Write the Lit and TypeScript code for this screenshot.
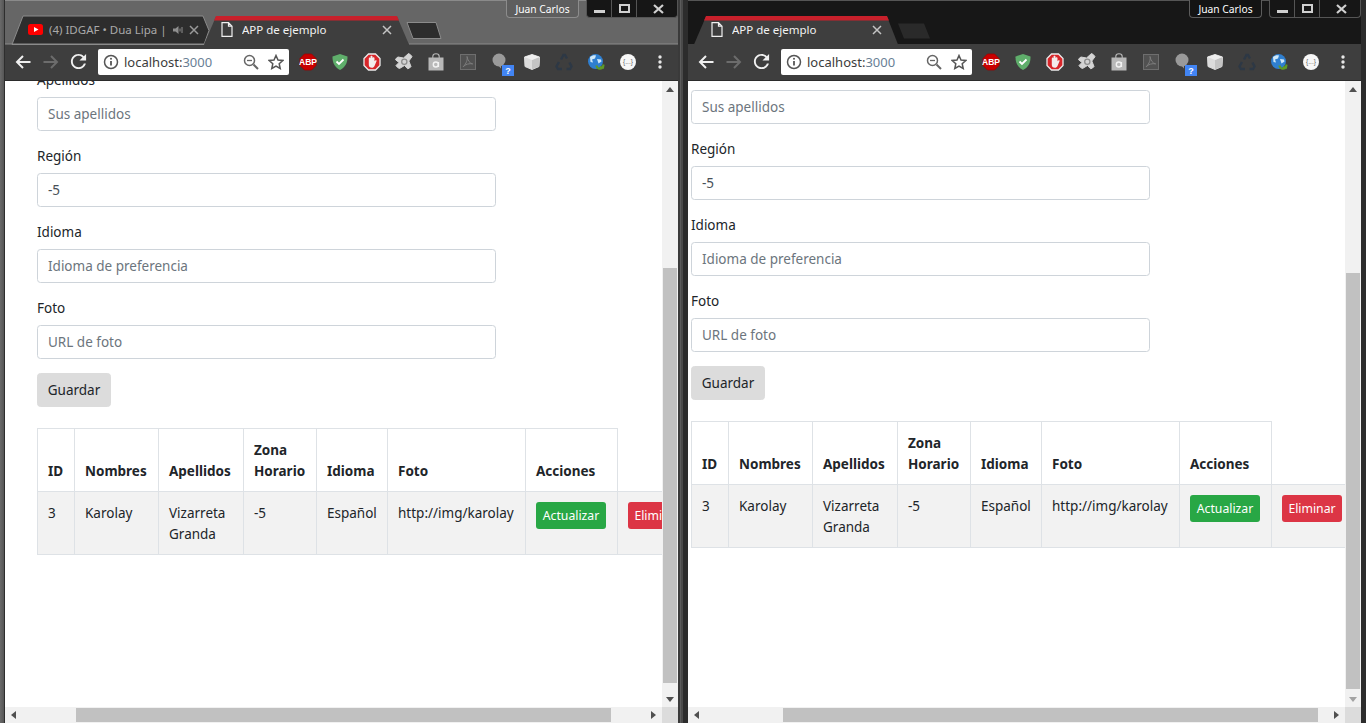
import { LitElement, html, css, svg } from "lit";
import { customElement, property } from "lit/decorators.js";

const icon = (w: number, h: number, body: unknown) =>
  html`<svg width=${w} height=${h} viewBox="0 0 ${w} ${h}" xmlns="http://www.w3.org/2000/svg">${body}</svg>`;

const extensions = () => [
  icon(18, 18, svg`<polygon points="5.500,1 12.500,1 17,5.500 17,12.500 12.500,17 5.500,17 1,12.500 1,5.500" fill="#c80000" stroke="#a00000" stroke-width=".8"/><text x="9" y="12.200" text-anchor="middle" font-family="Liberation Sans" font-size="8.500" font-weight="700" fill="#fff">ABP</text>`),
  icon(18, 18, svg`<path d="M9 1l7.500 2.500c.2 6.500-2.500 11-7.500 13.500C4 14.500 1.300 10 1.500 3.500z" fill="#5fae6b"/><path d="M5.500 8.500l2.500 2.500L12.500 6.500" fill="none" stroke="#fff" stroke-width="1.800"/>`),
  icon(18, 18, svg`<polygon points="5.500,1 12.500,1 17,5.500 17,12.500 12.500,17 5.500,17 1,12.500 1,5.500" fill="#d8262a" stroke="#ececec" stroke-width="1.300"/><path d="M5.800 8V5.500c0-1.200 1.500-1.200 1.700-.2V3.800c0-1.300 2-1.300 2 0v1.200c.3-1 2-.8 2 .3v3l1-1c.7-.5 1.400.2 1 .9L11.500 13c-.6 1-1.300 1.800-2.700 1.800-2 0-3-1.200-3-3.300z" fill="#f3ecec"/>`),
  icon(20, 20, svg`<path d="M14.500 1.500c1.500.7 2.800 1.800 3.500 3.200l-3.200 4.300 2.200 5.500c-.8 1.200-2 2-3.300 2.300L10.500 13.500l-5 3c-1.500-.5-3-1.700-3.500-3l3-3-3.500-2.800C2 6.500 2.800 5.500 4 5l5.500 1z" fill="#d4d4d4" stroke="#d4d4d4" stroke-linejoin="round"/><circle cx="10.300" cy="9.800" r="2.600" fill="none" stroke="#8d8d8d" stroke-width="1.300"/>`),
  icon(18, 18, svg`<path d="M5.800 5V3.500c0-3.600 6.400-3.600 6.400 0V5" fill="none" stroke="#b8b8b8" stroke-width="1.100"/><rect x="1.500" y="4.500" width="15" height="13" fill="#b8b8b8"/><circle cx="8.800" cy="11.500" r="2.500" fill="none" stroke="#f2f2f2" stroke-width="1.400"/><path d="M11.500 9v5" stroke="#f2f2f2" stroke-width="1.200"/>`),
  icon(18, 18, svg`<rect x="1.500" y="1.500" width="15" height="15" fill="#515151" stroke="#6e6e6e"/><path d="M8 3.500c.8 3-.6 7-3.800 10.200 2.500-2.500 6-3.500 9.500-2.800-3-.5-5-3.500-5.700-7.400z" fill="none" stroke="#7d7d7d" stroke-width="1"/>`),
  html`<span class="bubble">${icon(26, 24, svg`<circle cx="7" cy="7" r="6.500" fill="#9a9a9a"/><path d="M6 12l3 3.500V12z" fill="#9a9a9a"/><rect x="10" y="12" width="12" height="11" fill="#4285f4"/><text x="16" y="21" text-anchor="middle" font-family="Liberation Sans" font-size="9" font-weight="700" fill="#fff">?</text>`)}</span>`,
  icon(18, 18, svg`<polygon points="9,1.500 16.500,4 16,13.500 9,16.500 2,13.500 1.500,4" fill="#dcdcdc" stroke="#dcdcdc" stroke-linejoin="round"/><polygon points="9,7 16.500,4 16,13.500 9,16.500" fill="#c4c4c4"/><polygon points="9,1.500 16.500,4 9,7 1.500,4" fill="#efefef"/>`),
  icon(18, 18, svg`<path d="M6 6.500L8.500 2h1.500l2 3.500M14.500 9.500l2 4-1.500 2.500h-3.500M7 16H3l-1.500-2.500L4 9" fill="none" stroke="#2d3845" stroke-width="2.400"/>`),
  icon(18, 18, svg`<circle cx="8.500" cy="8.500" r="7.500" fill="#2f7fd0"/><path d="M3 4c2-1.500 4-2 6-1.500l-1 3-3 1 1 3-2.500-.5zM10 6l4 .5.500 2-3 2z" fill="#cfe8f8"/><path d="M9.500 12.500a3.500 3.500 0 0 0 6.500 1.500M16.500 11.500l-.5 3-3-.5" fill="none" stroke="#5f9a28" stroke-width="2.200"/>`),
  icon(18, 18, svg`<circle cx="9" cy="9" r="8" fill="#f7f7f7"/><text x="9" y="11.300" text-anchor="middle" font-family="Liberation Sans" font-size="6.500" fill="#666">{...}</text>`),
  icon(6, 16, svg`<circle cx="3" cy="3" r="1.700" fill="#e8e8e8"/><circle cx="3" cy="8" r="1.700" fill="#e8e8e8"/><circle cx="3" cy="13" r="1.700" fill="#e8e8e8"/>`),
];

const fileIcon = () =>
  icon(12, 15, svg`<path d="M1 .7h6.500L11 4.200V14.300H1z M7.500 .7V4.200H11" fill="none" stroke="#f0f0f0" stroke-width="1.200"/>`);
const closeIcon = (c: string) =>
  icon(10, 10, svg`<path d="M1 1l8 8M9 1l-8 8" stroke=${c} stroke-width="1.500"/>`);

@customElement("browser-window")
class BrowserWindow extends LitElement {
  @property() variant = "left";

  static styles = css`
    :host { display: block; width: 673px; height: 723px; font-family: "Noto Sans", "Open Sans", sans-serif; }
    .win { width: 673px; height: 723px; display: flex; flex-direction: column; overflow: hidden; background: #fff; }
    .title { position: relative; height: 44px; flex: none; display: flex; box-sizing: border-box; padding: 14px 0 0 6px; }
    .left .title { background: #666666; border-top: 1px solid #8a8a8a; }
    .right .title { background: #171717; border-top: 1px solid #555; }
    .shapes { position: absolute; left: 0; top: -1px; }
    .tab { position: relative; height: 29px; box-sizing: border-box; display: flex; align-items: center; padding: 0 0 0 17px; flex: none; font-size: 11.500px; color: #f2f2f2; }
    .tab.bg { width: 193px; color: #a9a9a9; }
    .tab.active { width: 205px; padding-right: 17px; }
    .tab .fav { width: 15px; flex: none; display: flex; margin-right: 6px; }
    .tab .name { flex: 1; white-space: nowrap; overflow: hidden; min-width: 0; }
    .tab.bg .close { margin-right: 5px; }
    .tab .spk { margin-right: 5px; display: flex; }
    .tab .close { display: flex; flex: none; }
    .caption { position: absolute; top: -1px; right: 0; display: flex; gap: 7px; height: 18px; }
    .who { width: 73px; box-sizing: border-box; display: flex; align-items: center; justify-content: center; font-size: 10.250px; color: #fff; border: 1px solid #8c8c8c; border-top: none; border-radius: 0 0 4px 4px; }
    .left .who { background: #5e5e5e; }
    .right .who { background: #141414; border-color: #5c5c5c; }
    .ctl { width: 92px; display: grid; grid-template-columns: 25px 25px 42px; box-sizing: border-box; background: #161616; border: 1px solid #555; border-top: none; border-radius: 0 0 4px 4px; }
    .ctl span { display: flex; align-items: center; justify-content: center; border-right: 1px solid #555; }
    .ctl span:last-child { border-right: none; }
    .toolbar { height: 37px; flex: none; box-sizing: border-box; background: #3e3e3e; border-bottom: 1px solid #2b2b2b; display: flex; align-items: center; padding-left: 4px; }
    .nav { width: 28px; height: 28px; display: flex; align-items: center; justify-content: center; flex: none; }
    .omni { width: 191px; height: 26px; margin: 0 3px 0 5px; flex: none; background: #fff; border-radius: 2px; display: flex; align-items: center; box-sizing: border-box; padding-left: 5px; font-size: 13px; color: #3c3c3c; }
    .omni .host { margin-left: 5px; flex: 1; white-space: nowrap; }
    .omni .port { color: #6a7f96; }
    .omni .tool { display: flex; }
    .omni .tool + .tool { margin-left: 9px; margin-right: 5px; }
    .ext { width: 32px; height: 28px; display: flex; align-items: center; justify-content: center; flex: none; }
    .bubble { display: flex; margin: 6px 0 0 10px; }
    .middle { flex: 1; display: flex; min-height: 0; }
    .view { flex: 1; min-width: 0; overflow: hidden; background: #fff; font-size: 13.500px; line-height: 21px; color: #212529; }
    .page { box-sizing: border-box; width: 700px; }
    .left .page { padding-left: 32px; margin-top: -12px; }
    .right .page { padding-left: 3px; margin-top: -19px; }
    .right .group:first-child label { visibility: hidden; }
    .group { width: 459px; margin-bottom: 14px; }
    label { display: block; margin-bottom: 7px; height: 20px; padding-top: 1px; }
    input { display: block; width: 459px; height: 34px; box-sizing: border-box; padding: 0 10px; border: 1px solid #ced4da; border-radius: 3.500px; font: inherit; color: #495057; background: #fff; outline: none; }
    input::placeholder { color: #6c757d; opacity: 1; }
    .save { display: block; width: 74px; height: 34px; box-sizing: border-box; border: 1px solid #dcdcdc; background: #dcdcdc; border-radius: 3.500px; font: inherit; color: #212529; padding: 0; }
    table { border-collapse: collapse; table-layout: fixed; width: 661px; margin-top: 21px; }
    th, td { border: 1px solid #dee2e6; padding: 11px 10px 9px; vertical-align: top; text-align: left; box-sizing: border-box; font-weight: 400; }
    thead th { vertical-align: bottom; font-weight: 700; color: #212529; height: 63px; }
    tbody tr { background: #f2f2f2; height: 63px; }
    .sm { display: block; height: 27px; margin-top: -1px; box-sizing: border-box; border-radius: 3px; font: inherit; font-size: 12.250px; line-height: 18px; color: #fff; border: none; padding: 0; white-space: nowrap; }
    .ok { background: #28a745; width: 70px; }
    .del { background: #dc3545; width: 60px; }
    .vbar { width: 16px; flex: none; background: #f1f1f1; display: flex; flex-direction: column; align-items: center; }
    .arrow { height: 16px; flex: none; display: flex; align-items: center; justify-content: center; }
    .thumb { background: #c1c1c1; }
    .v { width: 14px; flex: none; }
    .grow { flex: 1; }
    .hbar { height: 16px; flex: none; background: #f1f1f1; display: flex; align-items: center; }
    .hbar .h { height: 14px; flex: none; }
    .hbar .arrow { width: 17px; }
    .corner { width: 16px; height: 16px; background: #dcdcdc; flex: none; }
  `;

  render() {
    const left = this.variant === "left";
    const shapes = left
      ? svg`
        <polygon points="7,44 18,15.500 198,15.500 204,30 199,44" fill="#2d2d2d" stroke="#8b8b8b"/>
        <path d="M0 43.500H199M404 43.500H673" stroke="#8b8b8b" fill="none"/>
        <polygon points="199,44 211,16 392,16 404,44" fill="#3e3e3e"/>
        <polygon points="211,15.500 392,15.500 394,20 209,20" fill="#c8202b"/>
        <polygon points="402,22 431,22 436,38 408,38" fill="#2d2d2d" stroke="#8b8b8b"/>`
      : svg`
        <polygon points="6,44 18,16 199,16 210,44" fill="#3e3e3e"/>
        <polygon points="18,15.500 199,15.500 201,20 16,20" fill="#c8202b"/>
        <polygon points="210,23 236,23 242,38 216,38" fill="#2a2a2a"/>`;

    return html`<div class="win ${this.variant}">
      <div class="title">
        <svg class="shapes" width="673" height="45" viewBox="0 0 673 44">${shapes}</svg>
        ${left
          ? html`<div class="tab bg">
              <span class="fav">${icon(15, 11, svg`<rect width="15" height="11" rx="2.500" fill="#f00"/><polygon points="6,3 10.500,5.500 6,8" fill="#fff"/>`)}</span>
              <span class="name">(4) IDGAF • Dua Lipa |</span>
              <span class="spk">${icon(11, 10, svg`<path d="M0 3.500h2.500L5.500 1v8L2.500 6.500H0z" fill="#8f8f8f"/><path d="M7 3.500v3M9 2v6" stroke="#8f8f8f"/>`)}</span>
              <span class="close">${closeIcon("#9a9a9a")}</span>
            </div>`
          : null}
        <div class="tab active">
          <span class="fav">${fileIcon()}</span>
          <span class="name">APP de ejemplo</span>
          <span class="close">${closeIcon("#c4c4c4")}</span>
        </div>
        <div class="caption">
          <div class="who">Juan Carlos</div>
          <div class="ctl">
            <span>${icon(11, 10, svg`<rect x="0" y="6" width="11" height="3" fill="#d0d0d0"/>`)}</span>
            <span>${icon(11, 9, svg`<rect x="1" y="1" width="9" height="7" fill="none" stroke="#d0d0d0" stroke-width="2"/>`)}</span>
            <span>${icon(11, 10, svg`<path d="M1 1l9 8M10 1l-9 8" stroke="#d0d0d0" stroke-width="2.200"/>`)}</span>
          </div>
        </div>
      </div>
      <div class="toolbar">
        <span class="nav">${icon(16, 14, svg`<path d="M15.500 7H2.500M8 1L2 7l6 6" fill="none" stroke="#f0f0f0" stroke-width="2"/>`)}</span>
        <span class="nav">${icon(16, 14, svg`<path d="M.5 7H13.500M8 1l6 6-6 6" fill="none" stroke="#6c6c6c" stroke-width="2"/>`)}</span>
        <span class="nav">${icon(18, 18, svg`<g transform="translate(8.500 8.500) scale(.95) translate(-12 -12)"><path d="M17.650 6.350C16.200 4.900 14.210 4 12 4c-4.420 0-7.990 3.580-7.990 8s3.570 8 7.990 8c3.730 0 6.840-2.550 7.730-6h-2.080c-.82 2.330-3.040 4-5.650 4-3.310 0-6-2.690-6-6s2.690-6 6-6c1.660 0 3.140.69 4.220 1.780L13 11h7V4l-2.350 2.350z" fill="#f0f0f0"/></g>`)}</span>
        <div class="omni">
          <span class="tool">${icon(16, 16, svg`<circle cx="8" cy="8" r="6.500" fill="none" stroke="#555" stroke-width="1.500"/><path d="M8 7v4.500" stroke="#555" stroke-width="1.800"/><circle cx="8" cy="4.800" r="1" fill="#555"/>`)}</span>
          <span class="host">localhost:<span class="port">3000</span></span>
          <span class="tool">${icon(16, 16, svg`<circle cx="6.500" cy="6.500" r="5" fill="none" stroke="#666" stroke-width="1.500"/><path d="M10.500 10.500l4.500 4.500" stroke="#666" stroke-width="2"/><path d="M4 6.500h5" stroke="#666" stroke-width="1.300"/>`)}</span>
          <span class="tool">${icon(16, 16, svg`<polygon points="8,1.500 10,6 14.800,6.500 11.200,9.700 12.200,14.500 8,12 3.800,14.500 4.800,9.700 1.200,6.500 6,6" fill="none" stroke="#555" stroke-width="1.500"/>`)}</span>
        </div>
        ${extensions().map((e) => html`<span class="ext">${e}</span>`)}
      </div>
      <div class="middle">
        <div class="view">
          <div class="page">
            <div class="group"><label>Apellidos</label><input placeholder="Sus apellidos" /></div>
            <div class="group"><label>Región</label><input .value=${"-5"} /></div>
            <div class="group"><label>Idioma</label><input placeholder="Idioma de preferencia" /></div>
            <div class="group"><label>Foto</label><input placeholder="URL de foto" /></div>
            <button class="save">Guardar</button>
            <table>
              <colgroup>
                ${[37, 84, 85, 73, 71, 138, 92, 81].map((w) => html`<col style="width:${w}px" />`)}
              </colgroup>
              <thead>
                <tr>
                  <th>ID</th><th>Nombres</th><th>Apellidos</th><th>Zona Horario</th><th>Idioma</th><th>Foto</th><th>Acciones</th>
                </tr>
              </thead>
              <tbody>
                <tr>
                  <td>3</td><td>Karolay</td><td>Vizarreta Granda</td><td>-5</td><td>Español</td><td>http://img/karolay</td>
                  <td><button class="sm ok">Actualizar</button></td>
                  <td><button class="sm del">Eliminar</button></td>
                </tr>
              </tbody>
            </table>
          </div>
        </div>
        <div class="vbar">
          <span class="arrow">${icon(8, 5, svg`<polygon points="4,0 8,5 0,5" fill="#505050"/>`)}</span>
          <div class="thumb v" style="margin-top:${left ? 171 : 176}px;height:${left ? 415 : 416}px"></div>
          <span class="grow"></span>
          <span class="arrow">${icon(8, 5, svg`<polygon points="0,0 8,0 4,5" fill=${left ? "#505050" : "#a3a3a3"} />`)}</span>
        </div>
      </div>
      <div class="hbar">
        <span class="arrow">${icon(5, 8, svg`<polygon points="5,0 5,8 0,4" fill="#505050"/>`)}</span>
        <div class="thumb h" style="margin-left:${left ? 54 : 78}px;width:535px"></div>
        <span class="grow"></span>
        <span class="arrow">${icon(5, 8, svg`<polygon points="0,0 0,8 5,4" fill="#505050"/>`)}</span>
        <span class="corner"></span>
      </div>
    </div>`;
  }
}

@customElement("app-root")
class AppRoot extends LitElement {
  static styles = css`
    :host { display: block; width: 1366px; height: 723px; overflow: hidden; background: #2b2b2b; }
    .desk { display: flex; height: 723px; }
    .edge-l { width: 5px; flex: none; background: linear-gradient(90deg, #6a6a6a 0, #585858 70%, #2e2e2e 85%, #2e2e2e 100%); }
    .split { width: 10px; flex: none; background: linear-gradient(90deg, #3a3a3a 0 20%, #5c5c5c 20% 35%, #4a4a4a 35% 50%, #2c2c2c 50% 100%); }
    .edge-r { width: 5px; flex: none; background: #2c2c2c; }
  `;
  render() {
    return html`<div class="desk">
      <div class="edge-l"></div>
      <browser-window variant="left"></browser-window>
      <div class="split"></div>
      <browser-window variant="right"></browser-window>
      <div class="edge-r"></div>
    </div>`;
  }
}
